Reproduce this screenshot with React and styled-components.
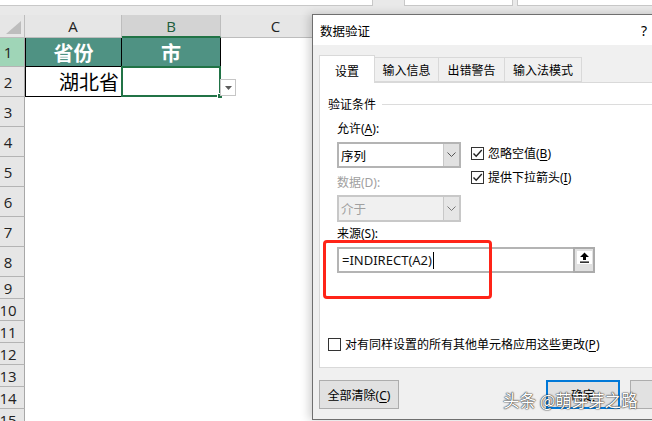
import React from 'react';
import styled, { createGlobalStyle } from 'styled-components';

const GlobalStyle = createGlobalStyle`
  html, body {
    margin: 0;
    padding: 0;
    background: #fff;
  }
  body {
    font-family: "Noto Sans", "Noto Sans CJK SC", sans-serif;
  }
  * {
    box-sizing: border-box;
  }
`;

const Screen = styled.div`
  position: relative;
  width: 652px;
  height: 421px;
  overflow: hidden;
  background: #fff;
`;

const TopStrip = styled.div`
  height: 15px;
  display: flex;
  align-items: flex-start;
  background: #e9e9e9;
`;

const RibbonBox = styled.div`
  flex: none;
  width: ${(props) => props.$w}px;
  margin-left: ${(props) => props.$gap}px;
  height: 6px;
  background: #fff;
  border: 1px solid #c8c8c8;
  border-top: none;
`;

const Sheet = styled.div`
  display: grid;
  grid-template-columns: 25px 97px 99px 110px;
  grid-template-rows: 23px 29px 30px repeat(6, 30px) repeat(7, 22px);
  font-family: "Open Sans", "Noto Sans CJK SC", sans-serif;
`;

const Corner = styled.div`
  display: flex;
  align-items: flex-end;
  justify-content: flex-end;
  padding: 0 3px 3px 0;
  background: #e6e6e6;
  border-right: 1px solid #bdbdbd;
  border-bottom: 1px solid #bdbdbd;
`;

const ColHead = styled.div`
  display: flex;
  align-items: center;
  justify-content: center;
  font-size: 15px;
  color: ${(props) => (props.$active ? '#1d5c3a' : '#222')};
  background: ${(props) => (props.$active ? '#d3d3d3' : '#e6e6e6')};
  border-right: 1px solid #bdbdbd;
  border-bottom: ${(props) => (props.$active ? '2px solid #217346' : '1px solid #bdbdbd')};
`;

const RowHead = styled.div`
  display: flex;
  align-items: center;
  justify-content: center;
  padding-right: 8px;
  font-size: 15px;
  color: #222;
  background: ${(props) => (props.$active ? '#9fd5b7' : '#e6e6e6')};
  border-right: 1px solid #a8a8a8;
  border-bottom: 1px solid #b4b4b4;
`;

const Cell = styled.div`
  position: relative;
  display: flex;
  align-items: center;
  justify-content: ${(props) => props.$align || 'center'};
  padding: 0 2px;
  font-family: "Noto Sans CJK SC", sans-serif;
  font-size: 20px;
  font-weight: ${(props) => (props.$head ? 700 : 400)};
  color: ${(props) => (props.$head ? '#fff' : '#000')};
  background: ${(props) => (props.$head ? '#4f9283' : '#fff')};
  border-right: ${(props) => (props.$boxed ? '1px solid #000' : 'none')};
  border-bottom: ${(props) => (props.$boxed ? '1px solid #000' : 'none')};
  border-left: ${(props) => (props.$first ? '1px solid #000' : 'none')};
`;

const SelectedCell = styled.div`
  position: relative;
  z-index: 2;
  border: 2px solid #217346;
  margin: -1px 0 0 -1px;
  background: #fff;
`;

const FillHandle = styled.span`
  position: absolute;
  right: -4px;
  bottom: -4px;
  width: 6px;
  height: 6px;
  background: #217346;
  border: 1px solid #fff;
`;

const CellDropButton = styled.span`
  position: absolute;
  left: calc(100% + 1px);
  top: 11px;
  width: 16px;
  height: 17px;
  display: flex;
  align-items: center;
  justify-content: center;
  background: #fff;
  border: 1px solid #c6c6c6;
`;

const Dialog = styled.div`
  position: absolute;
  left: 312px;
  top: 14px;
  width: 360px;
  height: 406px;
  display: flex;
  flex-direction: column;
  background: #f0f0f0;
  border: 1px solid #6f6f6f;
  box-shadow: -3px 0 9px rgba(0, 0, 0, 0.18);
  font-family: "Noto Sans", "Noto Sans CJK SC", sans-serif;
  font-size: 12px;
  color: #000;
`;

const TitleBar = styled.div`
  height: 30px;
  display: flex;
  align-items: center;
  justify-content: space-between;
  padding: 0 24px 0 7px;
  background: #fff;
  font-size: 12.5px;
`;

const HelpMark = styled.span`
  font-size: 14px;
`;

const DialogBody = styled.div`
  flex: 1;
  display: flex;
  flex-direction: column;
  padding: 10px 0 0 6px;
`;

const TabRow = styled.div`
  display: flex;
  align-items: flex-end;
  height: 27px;
  position: relative;
  z-index: 1;
`;

const Tab = styled.div`
  flex: none;
  width: ${(props) => props.$w}px;
  height: ${(props) => (props.$active ? 28 : 25)}px;
  margin-bottom: ${(props) => (props.$active ? -1 : 0)}px;
  display: flex;
  align-items: center;
  justify-content: center;
  padding-top: ${(props) => (props.$active ? 2 : 0)}px;
  background: ${(props) => (props.$active ? '#fff' : '#f0f0f0')};
  border: 1px solid #d9d9d9;
  border-bottom: ${(props) => (props.$active ? 'none' : '1px solid #d9d9d9')};
  border-left: ${(props) => (props.$active ? '1px solid #d9d9d9' : 'none')};
`;

const Panel = styled.div`
  flex: none;
  width: 345px;
  height: 286px;
  display: flex;
  flex-direction: column;
  padding: 13px 0 16px 8px;
  background: #fff;
  border: 1px solid #d9d9d9;
`;

const GroupTitle = styled.div`
  display: flex;
  align-items: center;
  gap: 6px;
  height: 16px;

  &::after {
    content: '';
    flex: 1;
    height: 1px;
    background: #dcdcdc;
  }
`;

const Settings = styled.div`
  display: flex;
  flex-direction: column;
  padding-left: 9px;
  margin-top: 9px;
`;

const UpperRow = styled.div`
  display: flex;
  gap: 10px;
`;

const LeftCol = styled.div`
  width: 124px;
  display: flex;
  flex-direction: column;
`;

const RightCol = styled.div`
  display: flex;
  flex-direction: column;
  gap: 10px;
  padding-top: 25px;
`;

const FieldLabel = styled.div`
  height: 16px;
  line-height: 16px;
  margin-top: ${(props) => props.$mt || 0}px;
  color: ${(props) => (props.$disabled ? '#a0a0a0' : '#000')};
`;

const Key = styled.span`
  text-decoration: underline;
  text-underline-offset: 2px;
`;

const Select = styled.div`
  height: ${(props) => props.$h}px;
  margin-top: ${(props) => props.$mt}px;
  display: flex;
  align-items: stretch;
  background: ${(props) => (props.$disabled ? '#f0f0f0' : '#fff')};
  border: 2px solid ${(props) => (props.$disabled ? '#c8c8c8' : '#b4b4b4')};
  color: ${(props) => (props.$disabled ? '#a0a0a0' : '#000')};
`;

const SelectValue = styled.div`
  flex: 1;
  display: flex;
  align-items: center;
  padding-left: 2px;
  font-size: 12.5px;
`;

const SelectArrow = styled.div`
  width: 16px;
  display: flex;
  align-items: center;
  justify-content: center;
  background: ${(props) => (props.$disabled ? '#e6e6e6' : '#e1e1e1')};
  border-left: 1px solid #c8c8c8;
`;

const CheckRow = styled.label`
  display: flex;
  align-items: center;
  gap: 4px;
  height: 14px;
  white-space: nowrap;
`;

const Box = styled.span`
  flex: none;
  width: 13px;
  height: 13px;
  display: flex;
  align-items: center;
  justify-content: center;
  background: #fff;
  border: 1px solid #333;
`;

const SourceRow = styled.div`
  display: flex;
  margin-top: 5px;
  height: 26px;
`;

const SourceInput = styled.div`
  width: 236px;
  display: flex;
  align-items: center;
  padding-left: 3px;
  border: 2px solid #b4b4b4;
  border-right: none;
  font-size: 13px;
  color: #111;
`;

const Caret = styled.span`
  width: 1px;
  height: 17px;
  margin-left: 1px;
  background: #000;
`;

const CollapseButton = styled.div`
  width: 22px;
  display: flex;
  align-items: flex-start;
  justify-content: center;
  padding-top: 2px;
  background: #e1e1e1;
  border: 2px solid #ababab;
`;

const CollapseIcon = styled.span`
  width: 15px;
  height: 13px;
  display: flex;
  align-items: center;
  justify-content: center;
  background: #fff;
`;

const ApplyRow = styled(CheckRow)`
  margin-top: auto;
`;

const Footer = styled.div`
  display: flex;
  gap: 10px;
  margin-top: 12px;
  height: 29px;
`;

const Button = styled.div`
  flex: none;
  width: ${(props) => props.$w}px;
  margin-left: ${(props) => props.$ml || 0}px;
  display: flex;
  align-items: center;
  justify-content: center;
  background: #e1e1e1;
  border: ${(props) => (props.$primary ? '2px solid #0078d7' : '1px solid #adadad')};
`;

const Highlight = styled.div`
  position: absolute;
  left: 323px;
  top: 240px;
  width: 169px;
  height: 59px;
  border: 3px solid #ff2418;
  border-radius: 4px;
`;

const Watermark = styled.div`
  position: absolute;
  left: 503px;
  top: 389px;
  font-family: "Noto Sans CJK SC", sans-serif;
  font-size: 16.5px;
  line-height: 22px;
  color: #fff;
  text-shadow: 0 0 1px #333, 0 0 1px #333, 0 0 2px rgba(0, 0, 0, 0.6);
  white-space: nowrap;
`;

function Chevron({ color }) {
  return (
    <svg width="9" height="6" viewBox="0 0 9 6">
      <polyline points="0.5,0.5 4.5,4.5 8.5,0.5" fill="none" stroke={color} strokeWidth="1" />
    </svg>
  );
}

function Check() {
  return (
    <svg width="11" height="11" viewBox="0 0 11 11">
      <polyline points="1.5,5.5 4.2,8.3 9.8,2" fill="none" stroke="#222" strokeWidth="1.4" />
    </svg>
  );
}

function Checkbox({ checked, children }) {
  return (
    <CheckRow>
      <Box>{checked && <Check />}</Box>
      <span>{children}</span>
    </CheckRow>
  );
}

const ROWS = [3, 4, 5, 6, 7, 8, 9, 10, 11, 12, 13, 14, 15];

function App() {
  return (
    <Screen>
      <GlobalStyle />
      <TopStrip>
        <RibbonBox $w={374} $gap={-1} />
        <RibbonBox $w={109} $gap={31} />
        <RibbonBox $w={140} $gap={4} />
      </TopStrip>

      <Sheet>
        <Corner>
          <svg width="15" height="13" viewBox="0 0 15 13">
            <polygon points="15,0 15,13 0,13" fill="#bdbdbd" />
          </svg>
        </Corner>
        <ColHead>A</ColHead>
        <ColHead $active>B</ColHead>
        <ColHead>C</ColHead>

        <RowHead $active>1</RowHead>
        <Cell $head $boxed $first>省份</Cell>
        <Cell $head $boxed>市</Cell>
        <Cell />

        <RowHead>2</RowHead>
        <Cell $boxed $first $align="flex-end">湖北省</Cell>
        <SelectedCell>
          <FillHandle />
          <CellDropButton>
            <svg width="7" height="4" viewBox="0 0 7 4">
              <polygon points="0,0 7,0 3.5,4" fill="#5c5c5c" />
            </svg>
          </CellDropButton>
        </SelectedCell>
        <Cell />

        {ROWS.map((n) => (
          <React.Fragment key={n}>
            <RowHead>{n}</RowHead>
            <Cell />
            <Cell />
            <Cell />
          </React.Fragment>
        ))}
      </Sheet>

      <Dialog>
        <TitleBar>
          <span>数据验证</span>
          <HelpMark>?</HelpMark>
        </TitleBar>
        <DialogBody>
          <TabRow>
            <Tab $w={56} $active>设置</Tab>
            <Tab $w={64}>输入信息</Tab>
            <Tab $w={66}>出错警告</Tab>
            <Tab $w={77}>输入法模式</Tab>
          </TabRow>
          <Panel>
            <GroupTitle>验证条件</GroupTitle>
            <Settings>
              <UpperRow>
                <LeftCol>
                  <FieldLabel>
                    允许(<Key>A</Key>):
                  </FieldLabel>
                  <Select $h={26} $mt={5}>
                    <SelectValue>序列</SelectValue>
                    <SelectArrow>
                      <Chevron color="#555" />
                    </SelectArrow>
                  </Select>
                  <FieldLabel $mt={7} $disabled>
                    数据(D):
                  </FieldLabel>
                  <Select $h={27} $mt={4} $disabled>
                    <SelectValue>介于</SelectValue>
                    <SelectArrow $disabled>
                      <Chevron color="#777" />
                    </SelectArrow>
                  </Select>
                </LeftCol>
                <RightCol>
                  <Checkbox checked>
                    忽略空值(<Key>B</Key>)
                  </Checkbox>
                  <Checkbox checked>
                    提供下拉箭头(<Key>I</Key>)
                  </Checkbox>
                </RightCol>
              </UpperRow>
              <FieldLabel $mt={4}>来源(S):</FieldLabel>
              <SourceRow>
                <SourceInput>
                  =INDIRECT(A2)
                  <Caret />
                </SourceInput>
                <CollapseButton>
                  <CollapseIcon>
                    <svg width="11" height="11" viewBox="0 0 11 11">
                      <polygon points="5.5,0.5 10,5 7,5 7,8 4,8 4,5 1,5" fill="#000" />
                      <rect x="1" y="9.5" width="9" height="1.3" fill="#000" />
                    </svg>
                  </CollapseIcon>
                </CollapseButton>
              </SourceRow>
            </Settings>
            <ApplyRow>
              <Box />
              <span>
                对有同样设置的所有其他单元格应用这些更改(<Key>P</Key>)
              </span>
            </ApplyRow>
          </Panel>
          <Footer>
            <Button $w={80}>
              <span>
                全部清除(<Key>C</Key>)
              </span>
            </Button>
            <Button $w={74} $ml={137} $primary>
              确定
            </Button>
            <Button $w={74} />
          </Footer>
        </DialogBody>
      </Dialog>

      <Highlight />
      <Watermark>头条 @萌芽芽之路</Watermark>
    </Screen>
  );
}

export default App;
